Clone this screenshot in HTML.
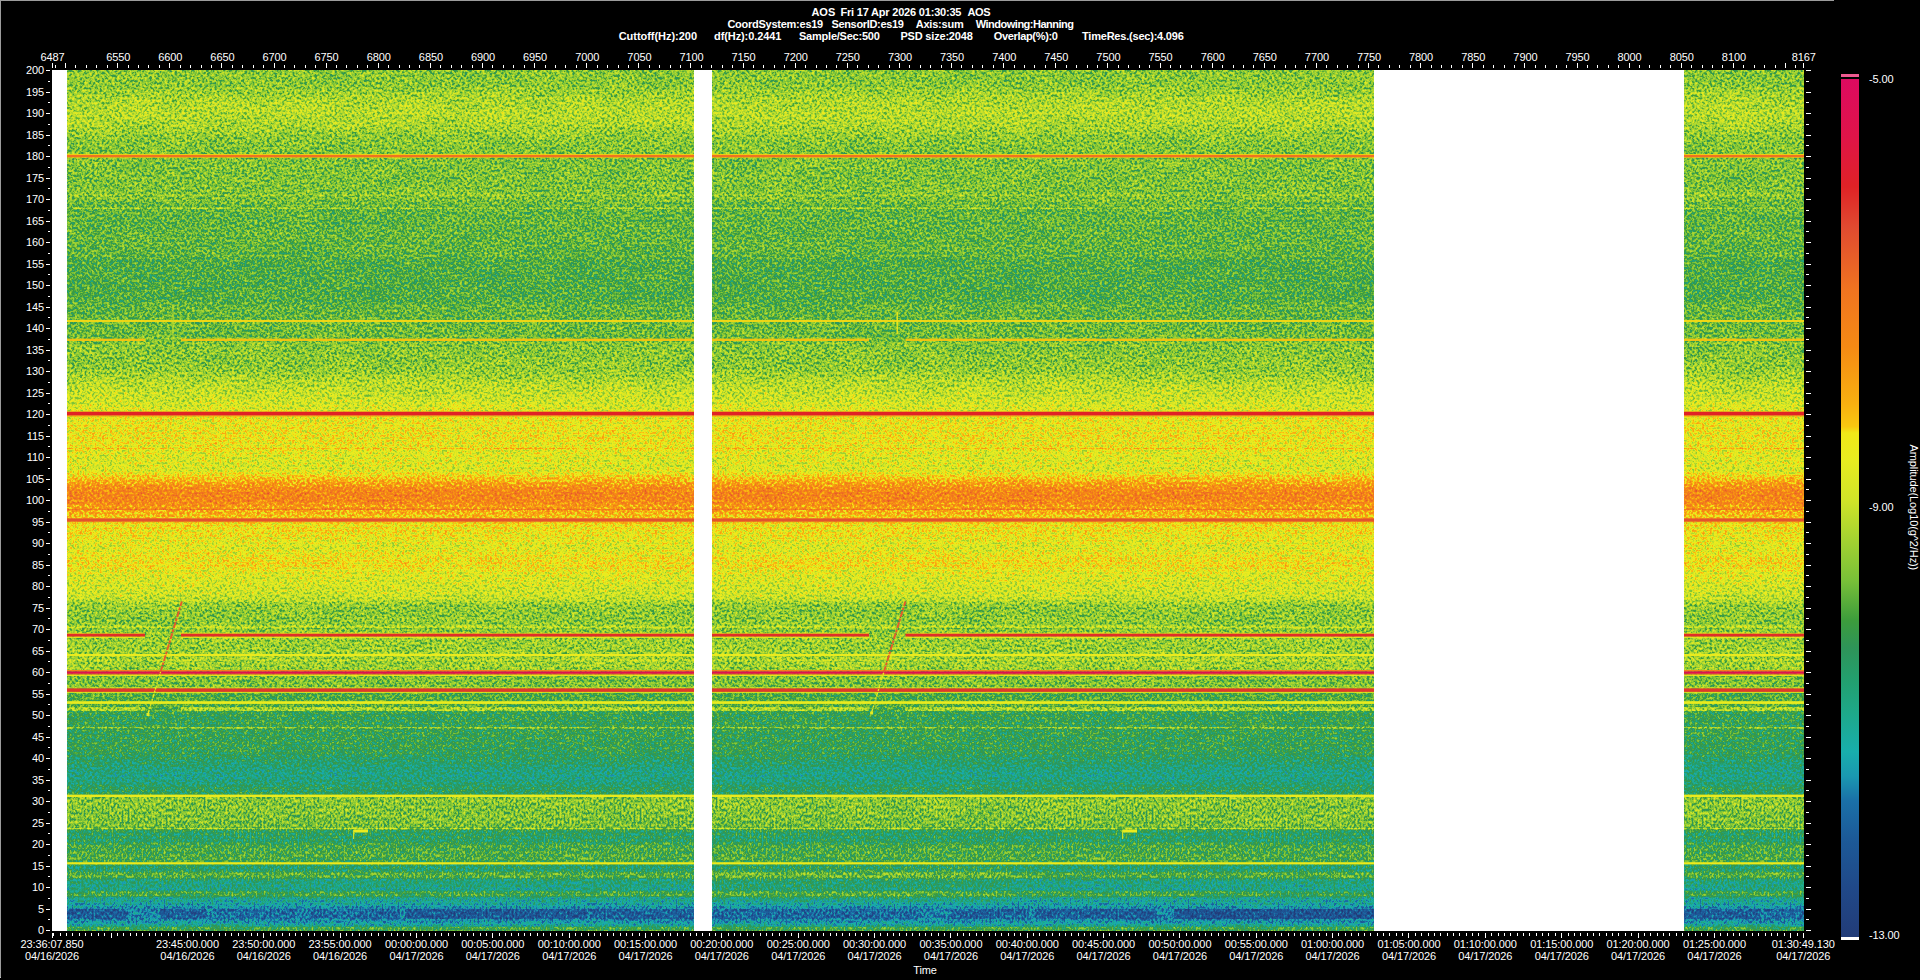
<!DOCTYPE html>
<html lang="en"><head><meta charset="utf-8"><title>AOS Spectrogram es19</title>
<style>
html,body{margin:0;padding:0;background:#000;}
body{width:1920px;height:980px;position:relative;overflow:hidden;font-family:"Liberation Sans",sans-serif;color:#fff;}
.t{position:absolute;font-weight:bold;font-size:11px;line-height:12px;white-space:pre;}
.edge{position:absolute;background:#9c9c9c;}
</style></head><body>
<div class="edge" style="left:0;top:0;width:1834px;height:1px"></div>
<div class="edge" style="left:0;top:0;width:1px;height:977px"></div>
<div class="edge" style="left:0;top:977px;width:1px;height:1px;background:#c4c4c4"></div>
<span class="t" style="left:811.4px;top:6px;letter-spacing:0.019px">AOS</span>
<span class="t" style="left:840.4px;top:6px;letter-spacing:-0.194px">Fri 17 Apr 2026 01:30:35</span>
<span class="t" style="left:967.4px;top:6px;letter-spacing:-0.315px">AOS</span>
<span class="t" style="left:727.4px;top:18px;letter-spacing:-0.254px">CoordSystem:es19</span>
<span class="t" style="left:831.4px;top:18px;letter-spacing:-0.326px">SensorID:es19</span>
<span class="t" style="left:915.7px;top:18px;letter-spacing:-0.204px">Axis:sum</span>
<span class="t" style="left:975.7px;top:18px;letter-spacing:-0.489px">Windowing:Hanning</span>
<span class="t" style="left:618.7px;top:30px;letter-spacing:-0.035px">Cuttoff(Hz):200</span>
<span class="t" style="left:714.0px;top:30px;letter-spacing:-0.090px">df(Hz):0.2441</span>
<span class="t" style="left:799.0px;top:30px;letter-spacing:-0.227px">Sample/Sec:500</span>
<span class="t" style="left:900.4px;top:30px;letter-spacing:-0.185px">PSD size:2048</span>
<span class="t" style="left:993.7px;top:30px;letter-spacing:-0.330px">Overlap(%):0</span>
<span class="t" style="left:1082.0px;top:30px;letter-spacing:-0.210px">TimeRes.(sec):4.096</span>
<svg id="spec" width="1752" height="861" viewBox="52 70 1752 861" style="position:absolute;left:52px;top:70px">
<defs>
<linearGradient id="pg" gradientUnits="userSpaceOnUse" x1="0" y1="70" x2="0" y2="931">
<stop offset="0.0000" stop-color="#737373"/>
<stop offset="0.0174" stop-color="#737373"/>
<stop offset="0.0348" stop-color="#7c7c7c"/>
<stop offset="0.0499" stop-color="#7f7f7f"/>
<stop offset="0.0639" stop-color="#7c7c7c"/>
<stop offset="0.0778" stop-color="#747474"/>
<stop offset="0.0929" stop-color="#717171"/>
<stop offset="0.1022" stop-color="#707070"/>
<stop offset="0.1103" stop-color="#707070"/>
<stop offset="0.1510" stop-color="#707070"/>
<stop offset="0.1556" stop-color="#6b6b6b"/>
<stop offset="0.1649" stop-color="#696969"/>
<stop offset="0.2091" stop-color="#696969"/>
<stop offset="0.2230" stop-color="#646464"/>
<stop offset="0.2671" stop-color="#646464"/>
<stop offset="0.2741" stop-color="#696969"/>
<stop offset="0.2880" stop-color="#696969"/>
<stop offset="0.2950" stop-color="#6c6c6c"/>
<stop offset="0.3101" stop-color="#6c6c6c"/>
<stop offset="0.3171" stop-color="#717171"/>
<stop offset="0.3484" stop-color="#757575"/>
<stop offset="0.3659" stop-color="#808080"/>
<stop offset="0.3786" stop-color="#848484"/>
<stop offset="0.3937" stop-color="#8b8b8b"/>
<stop offset="0.4042" stop-color="#919191"/>
<stop offset="0.4297" stop-color="#939393"/>
<stop offset="0.4437" stop-color="#8e8e8e"/>
<stop offset="0.4646" stop-color="#8b8b8b"/>
<stop offset="0.4715" stop-color="#999999"/>
<stop offset="0.4785" stop-color="#a7a7a7"/>
<stop offset="0.4855" stop-color="#b4b4b4"/>
<stop offset="0.4936" stop-color="#b9b9b9"/>
<stop offset="0.5017" stop-color="#b7b7b7"/>
<stop offset="0.5099" stop-color="#a9a9a9"/>
<stop offset="0.5203" stop-color="#9f9f9f"/>
<stop offset="0.5273" stop-color="#969696"/>
<stop offset="0.5401" stop-color="#939393"/>
<stop offset="0.5552" stop-color="#8c8c8c"/>
<stop offset="0.5645" stop-color="#939393"/>
<stop offset="0.5761" stop-color="#969696"/>
<stop offset="0.5830" stop-color="#8e8e8e"/>
<stop offset="0.5981" stop-color="#898989"/>
<stop offset="0.6109" stop-color="#858585"/>
<stop offset="0.6156" stop-color="#818181"/>
<stop offset="0.6202" stop-color="#777777"/>
<stop offset="0.6295" stop-color="#747474"/>
<stop offset="0.6492" stop-color="#737373"/>
<stop offset="0.6609" stop-color="#777777"/>
<stop offset="0.6771" stop-color="#777777"/>
<stop offset="0.6887" stop-color="#787878"/>
<stop offset="0.6969" stop-color="#787878"/>
<stop offset="0.7038" stop-color="#707070"/>
<stop offset="0.7154" stop-color="#707070"/>
<stop offset="0.7224" stop-color="#646464"/>
<stop offset="0.7305" stop-color="#646464"/>
<stop offset="0.7364" stop-color="#666666"/>
<stop offset="0.7398" stop-color="#666666"/>
<stop offset="0.7468" stop-color="#5c5c5c"/>
<stop offset="0.7898" stop-color="#5b5b5b"/>
<stop offset="0.8014" stop-color="#545454"/>
<stop offset="0.8107" stop-color="#4d4d4d"/>
<stop offset="0.8188" stop-color="#494949"/>
<stop offset="0.8281" stop-color="#4e4e4e"/>
<stop offset="0.8339" stop-color="#565656"/>
<stop offset="0.8409" stop-color="#565656"/>
<stop offset="0.8455" stop-color="#737373"/>
<stop offset="0.8618" stop-color="#717171"/>
<stop offset="0.8792" stop-color="#6e6e6e"/>
<stop offset="0.8839" stop-color="#565656"/>
<stop offset="0.8955" stop-color="#545454"/>
<stop offset="0.9001" stop-color="#616161"/>
<stop offset="0.9152" stop-color="#646464"/>
<stop offset="0.9187" stop-color="#606060"/>
<stop offset="0.9245" stop-color="#535353"/>
<stop offset="0.9303" stop-color="#535353"/>
<stop offset="0.9326" stop-color="#666666"/>
<stop offset="0.9373" stop-color="#666666"/>
<stop offset="0.9408" stop-color="#4d4d4d"/>
<stop offset="0.9524" stop-color="#484848"/>
<stop offset="0.9547" stop-color="#606060"/>
<stop offset="0.9593" stop-color="#606060"/>
<stop offset="0.9617" stop-color="#464646"/>
<stop offset="0.9675" stop-color="#404040"/>
<stop offset="0.9710" stop-color="#383838"/>
<stop offset="0.9744" stop-color="#303030"/>
<stop offset="0.9814" stop-color="#2e2e2e"/>
<stop offset="0.9872" stop-color="#313131"/>
<stop offset="0.9907" stop-color="#393939"/>
<stop offset="0.9942" stop-color="#464646"/>
<stop offset="0.9959" stop-color="#606060"/>
<stop offset="1.0000" stop-color="#606060"/>
</linearGradient>
<filter id="sp" x="48" y="66" width="1760" height="735" filterUnits="userSpaceOnUse" color-interpolation-filters="sRGB">
<feTurbulence type="fractalNoise" baseFrequency="0.4 0.4" numOctaves="2" seed="7" result="n0"/>
<feColorMatrix in="n0" type="matrix" values="1 0 0 0 0 1 0 0 0 0 1 0 0 0 0 0 0 0 0 1" result="n1"/>
<feComponentTransfer in="n1" result="n2">
<feFuncR type="table" tableValues="0.3937 0.3937 0.3937 0.3937 0.3937 0.3937 0.3937 0.3937 0.3937 0.3937 0.3937 0.3937 0.3937 0.3937 0.3937 0.3937 0.3937 0.3937 0.3937 0.3937 0.3937 0.3937 0.3937 0.3937 0.3937 0.3937 0.3937 0.3937 0.3937 0.3937 0.3937 0.3937 0.3960 0.4027 0.4089 0.4150 0.4207 0.4262 0.4315 0.4365 0.4414 0.4461 0.4507 0.4553 0.4597 0.4641 0.4683 0.4726 0.4768 0.4808 0.4868 0.4934 0.4971 0.5008 0.5044 0.5079 0.5114 0.5148 0.5180 0.5212 0.5245 0.5276 0.5307 0.5339 0.5370 0.5402 0.5433 0.5463 0.5495 0.5525 0.5557 0.5587 0.5619 0.5650 0.5681 0.5712 0.5742 0.5770 0.5800 0.5828 0.5857 0.5886 0.5917 0.5947 0.5979 0.6012 0.6020 0.6020 0.6020 0.6020 0.6020 0.6020 0.6020 0.6020 0.6020 0.6020 0.6020 0.6020 0.6020 0.6020 0.6020"/><feFuncG type="table" tableValues="0.3937 0.3937 0.3937 0.3937 0.3937 0.3937 0.3937 0.3937 0.3937 0.3937 0.3937 0.3937 0.3937 0.3937 0.3937 0.3937 0.3937 0.3937 0.3937 0.3937 0.3937 0.3937 0.3937 0.3937 0.3937 0.3937 0.3937 0.3937 0.3937 0.3937 0.3937 0.3937 0.3960 0.4027 0.4089 0.4150 0.4207 0.4262 0.4315 0.4365 0.4414 0.4461 0.4507 0.4553 0.4597 0.4641 0.4683 0.4726 0.4768 0.4808 0.4868 0.4934 0.4971 0.5008 0.5044 0.5079 0.5114 0.5148 0.5180 0.5212 0.5245 0.5276 0.5307 0.5339 0.5370 0.5402 0.5433 0.5463 0.5495 0.5525 0.5557 0.5587 0.5619 0.5650 0.5681 0.5712 0.5742 0.5770 0.5800 0.5828 0.5857 0.5886 0.5917 0.5947 0.5979 0.6012 0.6020 0.6020 0.6020 0.6020 0.6020 0.6020 0.6020 0.6020 0.6020 0.6020 0.6020 0.6020 0.6020 0.6020 0.6020"/><feFuncB type="table" tableValues="0.3937 0.3937 0.3937 0.3937 0.3937 0.3937 0.3937 0.3937 0.3937 0.3937 0.3937 0.3937 0.3937 0.3937 0.3937 0.3937 0.3937 0.3937 0.3937 0.3937 0.3937 0.3937 0.3937 0.3937 0.3937 0.3937 0.3937 0.3937 0.3937 0.3937 0.3937 0.3937 0.3960 0.4027 0.4089 0.4150 0.4207 0.4262 0.4315 0.4365 0.4414 0.4461 0.4507 0.4553 0.4597 0.4641 0.4683 0.4726 0.4768 0.4808 0.4868 0.4934 0.4971 0.5008 0.5044 0.5079 0.5114 0.5148 0.5180 0.5212 0.5245 0.5276 0.5307 0.5339 0.5370 0.5402 0.5433 0.5463 0.5495 0.5525 0.5557 0.5587 0.5619 0.5650 0.5681 0.5712 0.5742 0.5770 0.5800 0.5828 0.5857 0.5886 0.5917 0.5947 0.5979 0.6012 0.6020 0.6020 0.6020 0.6020 0.6020 0.6020 0.6020 0.6020 0.6020 0.6020 0.6020 0.6020 0.6020 0.6020 0.6020"/>
</feComponentTransfer>
<feTurbulence type="fractalNoise" baseFrequency="0.025 0.07" numOctaves="2" seed="9" result="lf0"/>
<feColorMatrix in="lf0" type="matrix" values="0.045 0 0 0 0.4775 0.045 0 0 0 0.4775 0.045 0 0 0 0.4775 0 0 0 0 1" result="lf"/>
<feComposite in="n2" in2="lf" operator="arithmetic" k1="0" k2="1" k3="1" k4="-0.5" result="n3"/>
<feComposite in="SourceGraphic" in2="n3" operator="arithmetic" k1="0" k2="1" k3="1" k4="-0.5" result="s"/>
<feComponentTransfer in="s" result="c">
<feFuncR type="table" tableValues="0.133 0.132 0.131 0.130 0.129 0.128 0.127 0.126 0.124 0.122 0.120 0.118 0.115 0.113 0.111 0.109 0.108 0.107 0.105 0.104 0.102 0.102 0.102 0.102 0.102 0.100 0.098 0.096 0.095 0.099 0.103 0.107 0.111 0.115 0.119 0.123 0.126 0.130 0.133 0.142 0.151 0.160 0.169 0.179 0.191 0.205 0.219 0.233 0.267 0.307 0.347 0.386 0.426 0.466 0.495 0.523 0.551 0.579 0.607 0.635 0.664 0.693 0.723 0.753 0.782 0.812 0.830 0.846 0.861 0.877 0.893 0.909 0.917 0.925 0.932 0.940 0.967 0.973 0.973 0.973 0.972 0.970 0.969 0.968 0.966 0.965 0.964 0.962 0.961 0.958 0.956 0.954 0.952 0.949 0.947 0.945 0.942 0.938 0.931 0.924 0.918 0.911 0.904 0.898 0.891 0.885 0.878 0.878 0.878 0.878 0.878 0.878 0.878 0.878 0.878 0.878 0.878 0.878 0.878 0.878 0.878 0.876 0.875 0.873 0.872 0.871 0.869 0.868 0.867"/>
<feFuncG type="table" tableValues="0.235 0.242 0.248 0.255 0.261 0.268 0.275 0.281 0.290 0.299 0.309 0.318 0.327 0.337 0.346 0.357 0.373 0.388 0.403 0.419 0.434 0.468 0.511 0.553 0.596 0.620 0.643 0.666 0.681 0.677 0.673 0.669 0.665 0.661 0.656 0.649 0.642 0.635 0.628 0.619 0.610 0.601 0.591 0.582 0.587 0.595 0.602 0.610 0.631 0.655 0.679 0.702 0.726 0.750 0.763 0.775 0.787 0.798 0.810 0.822 0.833 0.845 0.857 0.869 0.881 0.893 0.899 0.904 0.909 0.915 0.920 0.925 0.922 0.918 0.914 0.911 0.805 0.761 0.733 0.705 0.682 0.664 0.647 0.629 0.611 0.594 0.576 0.559 0.541 0.531 0.521 0.511 0.500 0.490 0.480 0.470 0.460 0.446 0.428 0.411 0.393 0.376 0.359 0.341 0.324 0.306 0.288 0.262 0.237 0.211 0.185 0.159 0.133 0.126 0.118 0.111 0.103 0.096 0.089 0.081 0.076 0.071 0.066 0.062 0.057 0.053 0.048 0.044 0.039"/>
<feFuncB type="table" tableValues="0.471 0.479 0.488 0.497 0.505 0.514 0.523 0.532 0.540 0.548 0.557 0.565 0.573 0.582 0.590 0.599 0.610 0.622 0.633 0.644 0.655 0.665 0.673 0.682 0.690 0.686 0.682 0.677 0.667 0.643 0.619 0.595 0.571 0.548 0.525 0.504 0.483 0.462 0.441 0.422 0.404 0.386 0.367 0.349 0.323 0.296 0.268 0.241 0.233 0.231 0.228 0.225 0.223 0.220 0.215 0.211 0.206 0.201 0.197 0.192 0.187 0.181 0.175 0.169 0.164 0.158 0.152 0.147 0.142 0.136 0.131 0.126 0.118 0.111 0.103 0.096 0.068 0.063 0.063 0.063 0.064 0.065 0.067 0.069 0.071 0.073 0.075 0.077 0.078 0.084 0.090 0.095 0.101 0.106 0.112 0.117 0.123 0.129 0.136 0.142 0.149 0.156 0.162 0.169 0.175 0.182 0.188 0.181 0.175 0.168 0.162 0.155 0.149 0.167 0.185 0.203 0.221 0.240 0.258 0.276 0.289 0.300 0.311 0.322 0.333 0.344 0.355 0.366 0.376"/>
<feFuncA type="linear" slope="0" intercept="1"/>
</feComponentTransfer>
<feGaussianBlur in="c" stdDeviation="0.75" result="B"/>
<feColorMatrix in="c" type="matrix" values="0.299 0.587 0.114 0 0 0.299 0.587 0.114 0 0 0.299 0.587 0.114 0 0 0 0 0 0 1" result="L1"/>
<feColorMatrix in="B" type="matrix" values="-0.299 -0.587 -0.114 0 1 -0.299 -0.587 -0.114 0 1 -0.299 -0.587 -0.114 0 1 0 0 0 0 1" result="L2i"/>
<feComposite in="L1" in2="L2i" operator="arithmetic" k1="0" k2="0.5" k3="0.5" k4="0" result="D"/>
<feComposite in="B" in2="D" operator="arithmetic" k1="0" k2="1" k3="2" k4="-1"/>
</filter>
<filter id="sp2" x="48" y="793" width="1760" height="142" filterUnits="userSpaceOnUse" color-interpolation-filters="sRGB">
<feTurbulence type="fractalNoise" baseFrequency="0.5 0.33" numOctaves="2" seed="11" result="n0"/>
<feColorMatrix in="n0" type="matrix" values="1 0 0 0 0 1 0 0 0 0 1 0 0 0 0 0 0 0 0 1" result="n1"/>
<feComponentTransfer in="n1" result="n2">
<feFuncR type="table" tableValues="0.3937 0.3937 0.3937 0.3937 0.3937 0.3937 0.3937 0.3937 0.3937 0.3937 0.3937 0.3937 0.3937 0.3937 0.3937 0.3937 0.3937 0.3937 0.3937 0.3937 0.3937 0.3937 0.3937 0.3937 0.3937 0.3937 0.3937 0.3937 0.3937 0.3937 0.3937 0.3937 0.3960 0.4027 0.4089 0.4150 0.4207 0.4262 0.4315 0.4365 0.4414 0.4461 0.4507 0.4553 0.4597 0.4641 0.4683 0.4726 0.4768 0.4808 0.4868 0.4934 0.4971 0.5008 0.5044 0.5079 0.5114 0.5148 0.5180 0.5212 0.5245 0.5276 0.5307 0.5339 0.5370 0.5402 0.5433 0.5463 0.5495 0.5525 0.5557 0.5587 0.5619 0.5650 0.5681 0.5712 0.5742 0.5770 0.5800 0.5828 0.5857 0.5886 0.5917 0.5947 0.5979 0.6012 0.6020 0.6020 0.6020 0.6020 0.6020 0.6020 0.6020 0.6020 0.6020 0.6020 0.6020 0.6020 0.6020 0.6020 0.6020"/><feFuncG type="table" tableValues="0.3937 0.3937 0.3937 0.3937 0.3937 0.3937 0.3937 0.3937 0.3937 0.3937 0.3937 0.3937 0.3937 0.3937 0.3937 0.3937 0.3937 0.3937 0.3937 0.3937 0.3937 0.3937 0.3937 0.3937 0.3937 0.3937 0.3937 0.3937 0.3937 0.3937 0.3937 0.3937 0.3960 0.4027 0.4089 0.4150 0.4207 0.4262 0.4315 0.4365 0.4414 0.4461 0.4507 0.4553 0.4597 0.4641 0.4683 0.4726 0.4768 0.4808 0.4868 0.4934 0.4971 0.5008 0.5044 0.5079 0.5114 0.5148 0.5180 0.5212 0.5245 0.5276 0.5307 0.5339 0.5370 0.5402 0.5433 0.5463 0.5495 0.5525 0.5557 0.5587 0.5619 0.5650 0.5681 0.5712 0.5742 0.5770 0.5800 0.5828 0.5857 0.5886 0.5917 0.5947 0.5979 0.6012 0.6020 0.6020 0.6020 0.6020 0.6020 0.6020 0.6020 0.6020 0.6020 0.6020 0.6020 0.6020 0.6020 0.6020 0.6020"/><feFuncB type="table" tableValues="0.3937 0.3937 0.3937 0.3937 0.3937 0.3937 0.3937 0.3937 0.3937 0.3937 0.3937 0.3937 0.3937 0.3937 0.3937 0.3937 0.3937 0.3937 0.3937 0.3937 0.3937 0.3937 0.3937 0.3937 0.3937 0.3937 0.3937 0.3937 0.3937 0.3937 0.3937 0.3937 0.3960 0.4027 0.4089 0.4150 0.4207 0.4262 0.4315 0.4365 0.4414 0.4461 0.4507 0.4553 0.4597 0.4641 0.4683 0.4726 0.4768 0.4808 0.4868 0.4934 0.4971 0.5008 0.5044 0.5079 0.5114 0.5148 0.5180 0.5212 0.5245 0.5276 0.5307 0.5339 0.5370 0.5402 0.5433 0.5463 0.5495 0.5525 0.5557 0.5587 0.5619 0.5650 0.5681 0.5712 0.5742 0.5770 0.5800 0.5828 0.5857 0.5886 0.5917 0.5947 0.5979 0.6012 0.6020 0.6020 0.6020 0.6020 0.6020 0.6020 0.6020 0.6020 0.6020 0.6020 0.6020 0.6020 0.6020 0.6020 0.6020"/>
</feComponentTransfer>
<feTurbulence type="fractalNoise" baseFrequency="0.025 0.07" numOctaves="2" seed="13" result="lf0"/>
<feColorMatrix in="lf0" type="matrix" values="0.045 0 0 0 0.4775 0.045 0 0 0 0.4775 0.045 0 0 0 0.4775 0 0 0 0 1" result="lf"/>
<feComposite in="n2" in2="lf" operator="arithmetic" k1="0" k2="1" k3="1" k4="-0.5" result="n3"/>
<feComposite in="SourceGraphic" in2="n3" operator="arithmetic" k1="0" k2="1" k3="1" k4="-0.5" result="s"/>
<feComponentTransfer in="s" result="c">
<feFuncR type="table" tableValues="0.133 0.132 0.131 0.130 0.129 0.128 0.127 0.126 0.124 0.122 0.120 0.118 0.115 0.113 0.111 0.109 0.108 0.107 0.105 0.104 0.102 0.102 0.102 0.102 0.102 0.100 0.098 0.096 0.095 0.099 0.103 0.107 0.111 0.115 0.119 0.123 0.126 0.130 0.133 0.142 0.151 0.160 0.169 0.179 0.191 0.205 0.219 0.233 0.267 0.307 0.347 0.386 0.426 0.466 0.495 0.523 0.551 0.579 0.607 0.635 0.664 0.693 0.723 0.753 0.782 0.812 0.830 0.846 0.861 0.877 0.893 0.909 0.917 0.925 0.932 0.940 0.967 0.973 0.973 0.973 0.972 0.970 0.969 0.968 0.966 0.965 0.964 0.962 0.961 0.958 0.956 0.954 0.952 0.949 0.947 0.945 0.942 0.938 0.931 0.924 0.918 0.911 0.904 0.898 0.891 0.885 0.878 0.878 0.878 0.878 0.878 0.878 0.878 0.878 0.878 0.878 0.878 0.878 0.878 0.878 0.878 0.876 0.875 0.873 0.872 0.871 0.869 0.868 0.867"/>
<feFuncG type="table" tableValues="0.235 0.242 0.248 0.255 0.261 0.268 0.275 0.281 0.290 0.299 0.309 0.318 0.327 0.337 0.346 0.357 0.373 0.388 0.403 0.419 0.434 0.468 0.511 0.553 0.596 0.620 0.643 0.666 0.681 0.677 0.673 0.669 0.665 0.661 0.656 0.649 0.642 0.635 0.628 0.619 0.610 0.601 0.591 0.582 0.587 0.595 0.602 0.610 0.631 0.655 0.679 0.702 0.726 0.750 0.763 0.775 0.787 0.798 0.810 0.822 0.833 0.845 0.857 0.869 0.881 0.893 0.899 0.904 0.909 0.915 0.920 0.925 0.922 0.918 0.914 0.911 0.805 0.761 0.733 0.705 0.682 0.664 0.647 0.629 0.611 0.594 0.576 0.559 0.541 0.531 0.521 0.511 0.500 0.490 0.480 0.470 0.460 0.446 0.428 0.411 0.393 0.376 0.359 0.341 0.324 0.306 0.288 0.262 0.237 0.211 0.185 0.159 0.133 0.126 0.118 0.111 0.103 0.096 0.089 0.081 0.076 0.071 0.066 0.062 0.057 0.053 0.048 0.044 0.039"/>
<feFuncB type="table" tableValues="0.471 0.479 0.488 0.497 0.505 0.514 0.523 0.532 0.540 0.548 0.557 0.565 0.573 0.582 0.590 0.599 0.610 0.622 0.633 0.644 0.655 0.665 0.673 0.682 0.690 0.686 0.682 0.677 0.667 0.643 0.619 0.595 0.571 0.548 0.525 0.504 0.483 0.462 0.441 0.422 0.404 0.386 0.367 0.349 0.323 0.296 0.268 0.241 0.233 0.231 0.228 0.225 0.223 0.220 0.215 0.211 0.206 0.201 0.197 0.192 0.187 0.181 0.175 0.169 0.164 0.158 0.152 0.147 0.142 0.136 0.131 0.126 0.118 0.111 0.103 0.096 0.068 0.063 0.063 0.063 0.064 0.065 0.067 0.069 0.071 0.073 0.075 0.077 0.078 0.084 0.090 0.095 0.101 0.106 0.112 0.117 0.123 0.129 0.136 0.142 0.149 0.156 0.162 0.169 0.175 0.182 0.188 0.181 0.175 0.168 0.162 0.155 0.149 0.167 0.185 0.203 0.221 0.240 0.258 0.276 0.289 0.300 0.311 0.322 0.333 0.344 0.355 0.366 0.376"/>
<feFuncA type="linear" slope="0" intercept="1"/>
</feComponentTransfer>
<feGaussianBlur in="c" stdDeviation="0.75" result="B"/>
<feColorMatrix in="c" type="matrix" values="0.299 0.587 0.114 0 0 0.299 0.587 0.114 0 0 0.299 0.587 0.114 0 0 0 0 0 0 1" result="L1"/>
<feColorMatrix in="B" type="matrix" values="-0.299 -0.587 -0.114 0 1 -0.299 -0.587 -0.114 0 1 -0.299 -0.587 -0.114 0 1 0 0 0 0 1" result="L2i"/>
<feComposite in="L1" in2="L2i" operator="arithmetic" k1="0" k2="0.5" k3="0.5" k4="0" result="D"/>
<feComposite in="B" in2="D" operator="arithmetic" k1="0" k2="1" k3="2" k4="-1"/>
</filter>
<clipPath id="cpA"><rect x="52" y="70" width="1752" height="727"/></clipPath>
<clipPath id="cpB"><rect x="52" y="797" width="1752" height="134"/></clipPath>
<clipPath id="cp">
<rect x="67" y="70" width="627" height="861"/>
<rect x="712" y="70" width="662" height="861"/>
<rect x="1684" y="70" width="120" height="861"/>
</clipPath>
<g id="src">
<rect x="46" y="64" width="1764" height="873" fill="url(#pg)"/>
<rect x="67" y="909" width="61" height="10" fill="#1d1d1d" opacity="0.85"/><rect x="160" y="909" width="46" height="10" fill="#1d1d1d" opacity="0.85"/><rect x="215" y="909" width="80" height="10" fill="#262626" opacity="0.85"/><rect x="310" y="909" width="90" height="10" fill="#232323" opacity="0.85"/><rect x="405" y="909" width="182" height="10" fill="#1b1b1b" opacity="0.85"/><rect x="590" y="909" width="104" height="10" fill="#202020" opacity="0.85"/><rect x="713" y="909" width="206" height="10" fill="#232323" opacity="0.85"/><rect x="951" y="909" width="77" height="10" fill="#202020" opacity="0.85"/><rect x="1035" y="909" width="121" height="10" fill="#1e1e1e" opacity="0.85"/><rect x="1174" y="909" width="200" height="10" fill="#161616" opacity="0.85"/><rect x="1684" y="909" width="76" height="10" fill="#1d1d1d" opacity="0.85"/><rect x="1765" y="909" width="39" height="10" fill="#232323" opacity="0.85"/><rect x="712" y="866" width="300" height="36" fill="#fff" opacity="0.035"/><rect x="1012" y="866" width="362" height="36" fill="#000" opacity="0.02"/>
<rect x="52" y="194.25" width="1752" height="1.5" fill="#787878"/>
<rect x="52" y="207.55" width="1752" height="1.5" fill="#797979"/>
<rect x="52" y="625.60" width="1752" height="2.4" fill="#818181"/>
<rect x="52" y="659.30" width="1752" height="1.6" fill="#808080"/>
<rect x="52" y="726.90" width="1752" height="1.6" fill="#747474"/>
<rect x="52" y="827.95" width="1752" height="1.3" fill="#7c7c7c"/>
<rect x="52" y="447.95" width="1752" height="1.5" fill="#9f9f9f"/>
<rect x="52" y="508.65" width="1752" height="1.3" fill="#c2c2c2"/>
<rect x="52" y="255.50" width="1752" height="1" fill="#6e6e6e"/>
<rect x="52" y="707.20" width="93" height="3.8" fill="#7c7c7c"/>
<rect x="181" y="707.20" width="688" height="3.8" fill="#7c7c7c"/>
<rect x="905.5" y="707.20" width="898.5" height="3.8" fill="#7c7c7c"/>

</g>
</defs>
<rect x="52" y="70" width="1752" height="861" fill="#fff"/>
<g clip-path="url(#cp)"><g clip-path="url(#cpA)"><g filter="url(#sp)"><use href="#src"/></g></g><g clip-path="url(#cpB)"><g filter="url(#sp2)"><use href="#src"/></g></g>
<rect x="52" y="154" width="1752" height="1" fill="#f7cd11" opacity="0.9"/>
<rect x="52" y="155" width="1752" height="2" fill="#ef7321"/>
<rect x="52" y="157" width="1752" height="1" fill="#f8ae10" opacity="0.7"/>
<rect x="52" y="320" width="1752" height="2" fill="#f4d814" opacity="0.95"/>
<rect x="52" y="411" width="1752" height="1" fill="#f0e818" opacity="0.6"/>
<rect x="52" y="411.7" width="1752" height="3.5" fill="#e02226"/>
<rect x="52" y="415.2" width="1752" height="1" fill="#ee6f22"/>
<rect x="52" y="416.2" width="1752" height="0.8" fill="#f8b810" opacity="0.5"/>
<rect x="52" y="518" width="1752" height="0.6" fill="#f27e1b" opacity="0.8"/>
<rect x="52" y="518.5" width="1752" height="3.2" fill="#e3532d"/>
<rect x="52" y="521.7" width="1752" height="0.5" fill="#f38219" opacity="0.7"/>
<rect x="52" y="654" width="1752" height="2.2" fill="#eaeb1e"/>
<rect x="52" y="670" width="1752" height="1.4" fill="#f38219"/>
<rect x="52" y="671.4" width="1752" height="2.4" fill="#df1050"/>
<rect x="52" y="673.8" width="1752" height="0.9" fill="#e65a2a"/>
<rect x="52" y="674.7" width="1752" height="1.3" fill="#edea1b" opacity="0.9"/>
<rect x="52" y="687.4" width="1752" height="1" fill="#edea1b" opacity="0.9"/>
<rect x="52" y="688.4" width="1752" height="3.5" fill="#e0372b"/>
<rect x="52" y="691.9" width="1752" height="1.1" fill="#edea1b" opacity="0.8"/>
<rect x="52" y="701.2" width="1752" height="2.7" fill="#eaeb1e"/>
<rect x="52" y="794.6" width="1752" height="2.4" fill="#eaeb1e"/>
<rect x="52" y="862.2" width="1752" height="2.2" fill="#edea1b"/>
<rect x="52" y="338.6" width="93" height="2.4" fill="#f8c310" opacity="0.95"/>
<rect x="181" y="338.6" width="688" height="2.4" fill="#f8c310" opacity="0.95"/>
<rect x="905.5" y="338.6" width="898.5" height="2.4" fill="#f8c310" opacity="0.95"/>
<rect x="52" y="632.8" width="93" height="1" fill="#edea1b" opacity="0.9"/>
<rect x="52" y="633.7" width="93" height="3.0" fill="#e02d29"/>
<rect x="52" y="636.7" width="93" height="1.3" fill="#edea1b" opacity="0.8"/>
<rect x="181" y="632.8" width="688" height="1" fill="#edea1b" opacity="0.9"/>
<rect x="181" y="633.7" width="688" height="3.0" fill="#e02d29"/>
<rect x="181" y="636.7" width="688" height="1.3" fill="#edea1b" opacity="0.8"/>
<rect x="905.5" y="632.8" width="898.5" height="1" fill="#edea1b" opacity="0.9"/>
<rect x="905.5" y="633.7" width="898.5" height="3.0" fill="#e02d29"/>
<rect x="905.5" y="636.7" width="898.5" height="1.3" fill="#edea1b" opacity="0.8"/>
<path d="M148.0 714.0L160.6 672.0" stroke="#eaeb1e" stroke-width="1.3" stroke-dasharray="4 1.5 2 1" fill="none"/>
<path d="M160.6 672.0L181.8 601.5" stroke="#e65a2a" stroke-width="1.9" stroke-dasharray="6 1 3 1.5" fill="none"/>
<rect x="146.5" y="713.0" width="3" height="3" fill="#e5eb21"/>
<path d="M871.6 712.5L883.9 672.0" stroke="#eaeb1e" stroke-width="1.3" stroke-dasharray="4 1.5 2 1" fill="none"/>
<path d="M883.9 672.0L905.4 601.5" stroke="#e65a2a" stroke-width="1.9" stroke-dasharray="6 1 3 1.5" fill="none"/>
<rect x="870.1" y="711.5" width="3" height="3" fill="#e5eb21"/>
<path d="M173 712L181 742" stroke="#a3d231" stroke-width="1" stroke-dasharray="2 2" fill="none"/>
<path d="M895 710L904 738" stroke="#a3d231" stroke-width="1" stroke-dasharray="2 2" fill="none"/>
<rect x="172.5" y="304" width="1" height="50" fill="#c8e12a"/>
<rect x="896.5" y="312" width="1.4" height="22" fill="#f0e818"/>
<rect x="354" y="829.5" width="14" height="3" fill="#eaeb1e"/>
<rect x="353" y="830" width="1.2" height="9" fill="#c8e12a"/>
<rect x="1123" y="829.5" width="14" height="3" fill="#eaeb1e"/>
<rect x="1122" y="830" width="1.2" height="9" fill="#c8e12a"/>
</g></svg>
<div style="position:absolute;left:1841px;top:74px;width:18px;height:3px;background:#ee5a90"></div><div style="position:absolute;left:1841px;top:79px;width:18px;height:858px;background:linear-gradient(to bottom,#dd0a60 0.00%,#e01448 6.75%,#e02226 12.50%,#e04a30 17.25%,#f07420 24.62%,#f58a14 31.25%,#f8b010 37.87%,#f8c810 40.50%,#f0e818 41.25%,#e8ec20 44.50%,#d0e428 49.12%,#a8d430 53.25%,#78c038 58.50%,#3c9c3c 63.13%,#2e9458 66.25%,#22a070 70.25%,#1ea888 73.75%,#18aeac 78.38%,#1a98b0 81.25%,#1a70a8 84.12%,#1c5a98 88.50%,#204888 94.38%,#223c78 100.00%)"></div><div style="position:absolute;left:1841px;top:937px;width:18px;height:3px;background:#fff"></div>
<svg width="1920" height="980" style="position:absolute;left:0;top:0" shape-rendering="crispEdges" font-family="Liberation Sans, sans-serif" font-size="11" fill="#fff" letter-spacing="-0.1">
<path d="M55 65h1v3h-1zM65 63h1v5h-1zM75 65h1v3h-1zM86 65h1v3h-1zM96 65h1v3h-1zM107 65h1v3h-1zM117 63h1v5h-1zM128 65h1v3h-1zM138 65h1v3h-1zM148 65h1v3h-1zM159 65h1v3h-1zM169 63h1v5h-1zM180 65h1v3h-1zM190 65h1v3h-1zM201 65h1v3h-1zM211 65h1v3h-1zM221 63h1v5h-1zM232 65h1v3h-1zM242 65h1v3h-1zM253 65h1v3h-1zM263 65h1v3h-1zM274 63h1v5h-1zM284 65h1v3h-1zM294 65h1v3h-1zM305 65h1v3h-1zM315 65h1v3h-1zM326 63h1v5h-1zM336 65h1v3h-1zM346 65h1v3h-1zM357 65h1v3h-1zM367 65h1v3h-1zM378 63h1v5h-1zM388 65h1v3h-1zM399 65h1v3h-1zM409 65h1v3h-1zM419 65h1v3h-1zM430 63h1v5h-1zM440 65h1v3h-1zM451 65h1v3h-1zM461 65h1v3h-1zM472 65h1v3h-1zM482 63h1v5h-1zM492 65h1v3h-1zM503 65h1v3h-1zM513 65h1v3h-1zM524 65h1v3h-1zM534 63h1v5h-1zM545 65h1v3h-1zM555 65h1v3h-1zM565 65h1v3h-1zM576 65h1v3h-1zM586 63h1v5h-1zM597 65h1v3h-1zM607 65h1v3h-1zM618 65h1v3h-1zM628 65h1v3h-1zM638 63h1v5h-1zM649 65h1v3h-1zM659 65h1v3h-1zM670 65h1v3h-1zM680 65h1v3h-1zM690 63h1v5h-1zM701 65h1v3h-1zM711 65h1v3h-1zM722 65h1v3h-1zM732 65h1v3h-1zM743 63h1v5h-1zM753 65h1v3h-1zM763 65h1v3h-1zM774 65h1v3h-1zM784 65h1v3h-1zM795 63h1v5h-1zM805 65h1v3h-1zM816 65h1v3h-1zM826 65h1v3h-1zM836 65h1v3h-1zM847 63h1v5h-1zM857 65h1v3h-1zM868 65h1v3h-1zM878 65h1v3h-1zM889 65h1v3h-1zM899 63h1v5h-1zM909 65h1v3h-1zM920 65h1v3h-1zM930 65h1v3h-1zM941 65h1v3h-1zM951 63h1v5h-1zM961 65h1v3h-1zM972 65h1v3h-1zM982 65h1v3h-1zM993 65h1v3h-1zM1003 63h1v5h-1zM1014 65h1v3h-1zM1024 65h1v3h-1zM1034 65h1v3h-1zM1045 65h1v3h-1zM1055 63h1v5h-1zM1066 65h1v3h-1zM1076 65h1v3h-1zM1087 65h1v3h-1zM1097 65h1v3h-1zM1107 63h1v5h-1zM1118 65h1v3h-1zM1128 65h1v3h-1zM1139 65h1v3h-1zM1149 65h1v3h-1zM1160 63h1v5h-1zM1170 65h1v3h-1zM1180 65h1v3h-1zM1191 65h1v3h-1zM1201 65h1v3h-1zM1212 63h1v5h-1zM1222 65h1v3h-1zM1233 65h1v3h-1zM1243 65h1v3h-1zM1253 65h1v3h-1zM1264 63h1v5h-1zM1274 65h1v3h-1zM1285 65h1v3h-1zM1295 65h1v3h-1zM1305 65h1v3h-1zM1316 63h1v5h-1zM1326 65h1v3h-1zM1337 65h1v3h-1zM1347 65h1v3h-1zM1358 65h1v3h-1zM1368 63h1v5h-1zM1378 65h1v3h-1zM1389 65h1v3h-1zM1399 65h1v3h-1zM1410 65h1v3h-1zM1420 63h1v5h-1zM1431 65h1v3h-1zM1441 65h1v3h-1zM1451 65h1v3h-1zM1462 65h1v3h-1zM1472 63h1v5h-1zM1483 65h1v3h-1zM1493 65h1v3h-1zM1504 65h1v3h-1zM1514 65h1v3h-1zM1524 63h1v5h-1zM1535 65h1v3h-1zM1545 65h1v3h-1zM1556 65h1v3h-1zM1566 65h1v3h-1zM1577 63h1v5h-1zM1587 65h1v3h-1zM1597 65h1v3h-1zM1608 65h1v3h-1zM1618 65h1v3h-1zM1629 63h1v5h-1zM1639 65h1v3h-1zM1649 65h1v3h-1zM1660 65h1v3h-1zM1670 65h1v3h-1zM1681 63h1v5h-1zM1691 65h1v3h-1zM1702 65h1v3h-1zM1712 65h1v3h-1zM1722 65h1v3h-1zM1733 63h1v5h-1zM1743 65h1v3h-1zM1754 65h1v3h-1zM1764 65h1v3h-1zM1775 65h1v3h-1zM1785 63h1v5h-1zM1795 65h1v3h-1zM52 63h1v5h-1zM1803 63h1v5h-1z"/>
<text x="52.5" y="61" text-anchor="middle">6487</text>
<text x="118.2" y="61" text-anchor="middle">6550</text>
<text x="170.3" y="61" text-anchor="middle">6600</text>
<text x="222.4" y="61" text-anchor="middle">6650</text>
<text x="274.5" y="61" text-anchor="middle">6700</text>
<text x="326.6" y="61" text-anchor="middle">6750</text>
<text x="378.8" y="61" text-anchor="middle">6800</text>
<text x="430.9" y="61" text-anchor="middle">6850</text>
<text x="483.0" y="61" text-anchor="middle">6900</text>
<text x="535.1" y="61" text-anchor="middle">6950</text>
<text x="587.2" y="61" text-anchor="middle">7000</text>
<text x="639.4" y="61" text-anchor="middle">7050</text>
<text x="691.5" y="61" text-anchor="middle">7100</text>
<text x="743.6" y="61" text-anchor="middle">7150</text>
<text x="795.7" y="61" text-anchor="middle">7200</text>
<text x="847.8" y="61" text-anchor="middle">7250</text>
<text x="900.0" y="61" text-anchor="middle">7300</text>
<text x="952.1" y="61" text-anchor="middle">7350</text>
<text x="1004.2" y="61" text-anchor="middle">7400</text>
<text x="1056.3" y="61" text-anchor="middle">7450</text>
<text x="1108.4" y="61" text-anchor="middle">7500</text>
<text x="1160.6" y="61" text-anchor="middle">7550</text>
<text x="1212.7" y="61" text-anchor="middle">7600</text>
<text x="1264.8" y="61" text-anchor="middle">7650</text>
<text x="1316.9" y="61" text-anchor="middle">7700</text>
<text x="1369.0" y="61" text-anchor="middle">7750</text>
<text x="1421.1" y="61" text-anchor="middle">7800</text>
<text x="1473.3" y="61" text-anchor="middle">7850</text>
<text x="1525.4" y="61" text-anchor="middle">7900</text>
<text x="1577.5" y="61" text-anchor="middle">7950</text>
<text x="1629.6" y="61" text-anchor="middle">8000</text>
<text x="1681.7" y="61" text-anchor="middle">8050</text>
<text x="1733.9" y="61" text-anchor="middle">8100</text>
<text x="1803.7" y="61" text-anchor="middle">8167</text>
<path d="M46 930h4v1h-4zM1806 930h5v1h-5zM48 919h2v1h-2zM1806 919h3v1h-3zM46 909h4v1h-4zM1806 909h5v1h-5zM48 898h2v1h-2zM1806 898h3v1h-3zM46 887h4v1h-4zM1806 887h5v1h-5zM48 876h2v1h-2zM1806 876h3v1h-3zM46 866h4v1h-4zM1806 866h5v1h-5zM48 855h2v1h-2zM1806 855h3v1h-3zM46 844h4v1h-4zM1806 844h5v1h-5zM48 833h2v1h-2zM1806 833h3v1h-3zM46 823h4v1h-4zM1806 823h5v1h-5zM48 812h2v1h-2zM1806 812h3v1h-3zM46 801h4v1h-4zM1806 801h5v1h-5zM48 790h2v1h-2zM1806 790h3v1h-3zM46 780h4v1h-4zM1806 780h5v1h-5zM48 769h2v1h-2zM1806 769h3v1h-3zM46 758h4v1h-4zM1806 758h5v1h-5zM48 747h2v1h-2zM1806 747h3v1h-3zM46 737h4v1h-4zM1806 737h5v1h-5zM48 726h2v1h-2zM1806 726h3v1h-3zM46 715h4v1h-4zM1806 715h5v1h-5zM48 704h2v1h-2zM1806 704h3v1h-3zM46 694h4v1h-4zM1806 694h5v1h-5zM48 683h2v1h-2zM1806 683h3v1h-3zM46 672h4v1h-4zM1806 672h5v1h-5zM48 661h2v1h-2zM1806 661h3v1h-3zM46 651h4v1h-4zM1806 651h5v1h-5zM48 640h2v1h-2zM1806 640h3v1h-3zM46 629h4v1h-4zM1806 629h5v1h-5zM48 618h2v1h-2zM1806 618h3v1h-3zM46 608h4v1h-4zM1806 608h5v1h-5zM48 597h2v1h-2zM1806 597h3v1h-3zM46 586h4v1h-4zM1806 586h5v1h-5zM48 575h2v1h-2zM1806 575h3v1h-3zM46 565h4v1h-4zM1806 565h5v1h-5zM48 554h2v1h-2zM1806 554h3v1h-3zM46 543h4v1h-4zM1806 543h5v1h-5zM48 532h2v1h-2zM1806 532h3v1h-3zM46 522h4v1h-4zM1806 522h5v1h-5zM48 511h2v1h-2zM1806 511h3v1h-3zM46 500h4v1h-4zM1806 500h5v1h-5zM48 489h2v1h-2zM1806 489h3v1h-3zM46 479h4v1h-4zM1806 479h5v1h-5zM48 468h2v1h-2zM1806 468h3v1h-3zM46 457h4v1h-4zM1806 457h5v1h-5zM48 446h2v1h-2zM1806 446h3v1h-3zM46 436h4v1h-4zM1806 436h5v1h-5zM48 425h2v1h-2zM1806 425h3v1h-3zM46 414h4v1h-4zM1806 414h5v1h-5zM48 403h2v1h-2zM1806 403h3v1h-3zM46 393h4v1h-4zM1806 393h5v1h-5zM48 382h2v1h-2zM1806 382h3v1h-3zM46 371h4v1h-4zM1806 371h5v1h-5zM48 360h2v1h-2zM1806 360h3v1h-3zM46 350h4v1h-4zM1806 350h5v1h-5zM48 339h2v1h-2zM1806 339h3v1h-3zM46 328h4v1h-4zM1806 328h5v1h-5zM48 317h2v1h-2zM1806 317h3v1h-3zM46 307h4v1h-4zM1806 307h5v1h-5zM48 296h2v1h-2zM1806 296h3v1h-3zM46 285h4v1h-4zM1806 285h5v1h-5zM48 274h2v1h-2zM1806 274h3v1h-3zM46 264h4v1h-4zM1806 264h5v1h-5zM48 253h2v1h-2zM1806 253h3v1h-3zM46 242h4v1h-4zM1806 242h5v1h-5zM48 231h2v1h-2zM1806 231h3v1h-3zM46 221h4v1h-4zM1806 221h5v1h-5zM48 210h2v1h-2zM1806 210h3v1h-3zM46 199h4v1h-4zM1806 199h5v1h-5zM48 188h2v1h-2zM1806 188h3v1h-3zM46 178h4v1h-4zM1806 178h5v1h-5zM48 167h2v1h-2zM1806 167h3v1h-3zM46 156h4v1h-4zM1806 156h5v1h-5zM48 145h2v1h-2zM1806 145h3v1h-3zM46 135h4v1h-4zM1806 135h5v1h-5zM48 124h2v1h-2zM1806 124h3v1h-3zM46 113h4v1h-4zM1806 113h5v1h-5zM48 102h2v1h-2zM1806 102h3v1h-3zM46 92h4v1h-4zM1806 92h5v1h-5zM48 81h2v1h-2zM1806 81h3v1h-3zM46 70h4v1h-4zM1806 70h5v1h-5z"/>
<text x="44" y="934.1" text-anchor="end">0</text>
<text x="44" y="912.6" text-anchor="end">5</text>
<text x="44" y="891.1" text-anchor="end">10</text>
<text x="44" y="869.6" text-anchor="end">15</text>
<text x="44" y="848.1" text-anchor="end">20</text>
<text x="44" y="826.6" text-anchor="end">25</text>
<text x="44" y="805.1" text-anchor="end">30</text>
<text x="44" y="783.6" text-anchor="end">35</text>
<text x="44" y="762.1" text-anchor="end">40</text>
<text x="44" y="740.6" text-anchor="end">45</text>
<text x="44" y="719.1" text-anchor="end">50</text>
<text x="44" y="697.6" text-anchor="end">55</text>
<text x="44" y="676.1" text-anchor="end">60</text>
<text x="44" y="654.6" text-anchor="end">65</text>
<text x="44" y="633.1" text-anchor="end">70</text>
<text x="44" y="611.6" text-anchor="end">75</text>
<text x="44" y="590.1" text-anchor="end">80</text>
<text x="44" y="568.6" text-anchor="end">85</text>
<text x="44" y="547.1" text-anchor="end">90</text>
<text x="44" y="525.6" text-anchor="end">95</text>
<text x="44" y="504.1" text-anchor="end">100</text>
<text x="44" y="482.6" text-anchor="end">105</text>
<text x="44" y="461.1" text-anchor="end">110</text>
<text x="44" y="439.6" text-anchor="end">115</text>
<text x="44" y="418.1" text-anchor="end">120</text>
<text x="44" y="396.6" text-anchor="end">125</text>
<text x="44" y="375.1" text-anchor="end">130</text>
<text x="44" y="353.6" text-anchor="end">135</text>
<text x="44" y="332.1" text-anchor="end">140</text>
<text x="44" y="310.6" text-anchor="end">145</text>
<text x="44" y="289.1" text-anchor="end">150</text>
<text x="44" y="267.6" text-anchor="end">155</text>
<text x="44" y="246.1" text-anchor="end">160</text>
<text x="44" y="224.6" text-anchor="end">165</text>
<text x="44" y="203.1" text-anchor="end">170</text>
<text x="44" y="181.6" text-anchor="end">175</text>
<text x="44" y="160.1" text-anchor="end">180</text>
<text x="44" y="138.6" text-anchor="end">185</text>
<text x="44" y="117.1" text-anchor="end">190</text>
<text x="44" y="95.6" text-anchor="end">195</text>
<text x="44" y="74.1" text-anchor="end">200</text>
<path d="M52 933h1v5h-1zM1803 933h1v5h-1zM53 933h1v3h-1zM60 933h1v3h-1zM66 933h1v3h-1zM72 933h1v3h-1zM79 933h1v3h-1zM85 933h1v3h-1zM91 933h1v3h-1zM98 933h1v3h-1zM104 933h1v3h-1zM111 933h1v5h-1zM117 933h1v3h-1zM123 933h1v3h-1zM130 933h1v3h-1zM136 933h1v3h-1zM142 933h1v3h-1zM149 933h1v3h-1zM155 933h1v3h-1zM161 933h1v3h-1zM168 933h1v3h-1zM174 933h1v3h-1zM181 933h1v3h-1zM187 933h1v5h-1zM193 933h1v3h-1zM200 933h1v3h-1zM206 933h1v3h-1zM212 933h1v3h-1zM219 933h1v3h-1zM225 933h1v3h-1zM231 933h1v3h-1zM238 933h1v3h-1zM244 933h1v3h-1zM251 933h1v3h-1zM257 933h1v3h-1zM263 933h1v5h-1zM270 933h1v3h-1zM276 933h1v3h-1zM282 933h1v3h-1zM289 933h1v3h-1zM295 933h1v3h-1zM301 933h1v3h-1zM308 933h1v3h-1zM314 933h1v3h-1zM321 933h1v3h-1zM327 933h1v3h-1zM333 933h1v3h-1zM340 933h1v5h-1zM346 933h1v3h-1zM352 933h1v3h-1zM359 933h1v3h-1zM365 933h1v3h-1zM371 933h1v3h-1zM378 933h1v3h-1zM384 933h1v3h-1zM391 933h1v3h-1zM397 933h1v3h-1zM403 933h1v3h-1zM410 933h1v3h-1zM416 933h1v5h-1zM422 933h1v3h-1zM429 933h1v3h-1zM435 933h1v3h-1zM441 933h1v3h-1zM448 933h1v3h-1zM454 933h1v3h-1zM460 933h1v3h-1zM467 933h1v3h-1zM473 933h1v3h-1zM480 933h1v3h-1zM486 933h1v3h-1zM492 933h1v5h-1zM499 933h1v3h-1zM505 933h1v3h-1zM511 933h1v3h-1zM518 933h1v3h-1zM524 933h1v3h-1zM530 933h1v3h-1zM537 933h1v3h-1zM543 933h1v3h-1zM550 933h1v3h-1zM556 933h1v3h-1zM562 933h1v3h-1zM569 933h1v5h-1zM575 933h1v3h-1zM581 933h1v3h-1zM588 933h1v3h-1zM594 933h1v3h-1zM600 933h1v3h-1zM607 933h1v3h-1zM613 933h1v3h-1zM620 933h1v3h-1zM626 933h1v3h-1zM632 933h1v3h-1zM639 933h1v3h-1zM645 933h1v5h-1zM651 933h1v3h-1zM658 933h1v3h-1zM664 933h1v3h-1zM670 933h1v3h-1zM677 933h1v3h-1zM683 933h1v3h-1zM690 933h1v3h-1zM696 933h1v3h-1zM702 933h1v3h-1zM709 933h1v3h-1zM715 933h1v3h-1zM721 933h1v5h-1zM728 933h1v3h-1zM734 933h1v3h-1zM740 933h1v3h-1zM747 933h1v3h-1zM753 933h1v3h-1zM760 933h1v3h-1zM766 933h1v3h-1zM772 933h1v3h-1zM779 933h1v3h-1zM785 933h1v3h-1zM791 933h1v3h-1zM798 933h1v5h-1zM804 933h1v3h-1zM810 933h1v3h-1zM817 933h1v3h-1zM823 933h1v3h-1zM830 933h1v3h-1zM836 933h1v3h-1zM842 933h1v3h-1zM849 933h1v3h-1zM855 933h1v3h-1zM861 933h1v3h-1zM868 933h1v3h-1zM874 933h1v5h-1zM880 933h1v3h-1zM887 933h1v3h-1zM893 933h1v3h-1zM899 933h1v3h-1zM906 933h1v3h-1zM912 933h1v3h-1zM919 933h1v3h-1zM925 933h1v3h-1zM931 933h1v3h-1zM938 933h1v3h-1zM944 933h1v3h-1zM950 933h1v5h-1zM957 933h1v3h-1zM963 933h1v3h-1zM969 933h1v3h-1zM976 933h1v3h-1zM982 933h1v3h-1zM989 933h1v3h-1zM995 933h1v3h-1zM1001 933h1v3h-1zM1008 933h1v3h-1zM1014 933h1v3h-1zM1020 933h1v3h-1zM1027 933h1v5h-1zM1033 933h1v3h-1zM1039 933h1v3h-1zM1046 933h1v3h-1zM1052 933h1v3h-1zM1059 933h1v3h-1zM1065 933h1v3h-1zM1071 933h1v3h-1zM1078 933h1v3h-1zM1084 933h1v3h-1zM1090 933h1v3h-1zM1097 933h1v3h-1zM1103 933h1v5h-1zM1109 933h1v3h-1zM1116 933h1v3h-1zM1122 933h1v3h-1zM1129 933h1v3h-1zM1135 933h1v3h-1zM1141 933h1v3h-1zM1148 933h1v3h-1zM1154 933h1v3h-1zM1160 933h1v3h-1zM1167 933h1v3h-1zM1173 933h1v3h-1zM1179 933h1v5h-1zM1186 933h1v3h-1zM1192 933h1v3h-1zM1199 933h1v3h-1zM1205 933h1v3h-1zM1211 933h1v3h-1zM1218 933h1v3h-1zM1224 933h1v3h-1zM1230 933h1v3h-1zM1237 933h1v3h-1zM1243 933h1v3h-1zM1249 933h1v3h-1zM1256 933h1v5h-1zM1262 933h1v3h-1zM1268 933h1v3h-1zM1275 933h1v3h-1zM1281 933h1v3h-1zM1288 933h1v3h-1zM1294 933h1v3h-1zM1300 933h1v3h-1zM1307 933h1v3h-1zM1313 933h1v3h-1zM1319 933h1v3h-1zM1326 933h1v3h-1zM1332 933h1v5h-1zM1338 933h1v3h-1zM1345 933h1v3h-1zM1351 933h1v3h-1zM1358 933h1v3h-1zM1364 933h1v3h-1zM1370 933h1v3h-1zM1377 933h1v3h-1zM1383 933h1v3h-1zM1389 933h1v3h-1zM1396 933h1v3h-1zM1402 933h1v3h-1zM1408 933h1v5h-1zM1415 933h1v3h-1zM1421 933h1v3h-1zM1428 933h1v3h-1zM1434 933h1v3h-1zM1440 933h1v3h-1zM1447 933h1v3h-1zM1453 933h1v3h-1zM1459 933h1v3h-1zM1466 933h1v3h-1zM1472 933h1v3h-1zM1478 933h1v3h-1zM1485 933h1v5h-1zM1491 933h1v3h-1zM1498 933h1v3h-1zM1504 933h1v3h-1zM1510 933h1v3h-1zM1517 933h1v3h-1zM1523 933h1v3h-1zM1529 933h1v3h-1zM1536 933h1v3h-1zM1542 933h1v3h-1zM1548 933h1v3h-1zM1555 933h1v3h-1zM1561 933h1v5h-1zM1568 933h1v3h-1zM1574 933h1v3h-1zM1580 933h1v3h-1zM1587 933h1v3h-1zM1593 933h1v3h-1zM1599 933h1v3h-1zM1606 933h1v3h-1zM1612 933h1v3h-1zM1618 933h1v3h-1zM1625 933h1v3h-1zM1631 933h1v3h-1zM1638 933h1v5h-1zM1644 933h1v3h-1zM1650 933h1v3h-1zM1657 933h1v3h-1zM1663 933h1v3h-1zM1669 933h1v3h-1zM1676 933h1v3h-1zM1682 933h1v3h-1zM1688 933h1v3h-1zM1695 933h1v3h-1zM1701 933h1v3h-1zM1707 933h1v3h-1zM1714 933h1v5h-1zM1720 933h1v3h-1zM1727 933h1v3h-1zM1733 933h1v3h-1zM1739 933h1v3h-1zM1746 933h1v3h-1zM1752 933h1v3h-1zM1758 933h1v3h-1zM1765 933h1v3h-1zM1771 933h1v3h-1zM1777 933h1v3h-1zM1784 933h1v3h-1zM1790 933h1v5h-1zM1797 933h1v3h-1z"/>
<text x="52.0" y="948" text-anchor="middle">23:36:07.850</text>
<text x="52.0" y="960" text-anchor="middle">04/16/2026</text>
<text x="187.4" y="948" text-anchor="middle">23:45:00.000</text>
<text x="187.4" y="960" text-anchor="middle">04/16/2026</text>
<text x="263.8" y="948" text-anchor="middle">23:50:00.000</text>
<text x="263.8" y="960" text-anchor="middle">04/16/2026</text>
<text x="340.1" y="948" text-anchor="middle">23:55:00.000</text>
<text x="340.1" y="960" text-anchor="middle">04/16/2026</text>
<text x="416.5" y="948" text-anchor="middle">00:00:00.000</text>
<text x="416.5" y="960" text-anchor="middle">04/17/2026</text>
<text x="492.8" y="948" text-anchor="middle">00:05:00.000</text>
<text x="492.8" y="960" text-anchor="middle">04/17/2026</text>
<text x="569.2" y="948" text-anchor="middle">00:10:00.000</text>
<text x="569.2" y="960" text-anchor="middle">04/17/2026</text>
<text x="645.5" y="948" text-anchor="middle">00:15:00.000</text>
<text x="645.5" y="960" text-anchor="middle">04/17/2026</text>
<text x="721.8" y="948" text-anchor="middle">00:20:00.000</text>
<text x="721.8" y="960" text-anchor="middle">04/17/2026</text>
<text x="798.2" y="948" text-anchor="middle">00:25:00.000</text>
<text x="798.2" y="960" text-anchor="middle">04/17/2026</text>
<text x="874.5" y="948" text-anchor="middle">00:30:00.000</text>
<text x="874.5" y="960" text-anchor="middle">04/17/2026</text>
<text x="950.9" y="948" text-anchor="middle">00:35:00.000</text>
<text x="950.9" y="960" text-anchor="middle">04/17/2026</text>
<text x="1027.2" y="948" text-anchor="middle">00:40:00.000</text>
<text x="1027.2" y="960" text-anchor="middle">04/17/2026</text>
<text x="1103.6" y="948" text-anchor="middle">00:45:00.000</text>
<text x="1103.6" y="960" text-anchor="middle">04/17/2026</text>
<text x="1179.9" y="948" text-anchor="middle">00:50:00.000</text>
<text x="1179.9" y="960" text-anchor="middle">04/17/2026</text>
<text x="1256.3" y="948" text-anchor="middle">00:55:00.000</text>
<text x="1256.3" y="960" text-anchor="middle">04/17/2026</text>
<text x="1332.6" y="948" text-anchor="middle">01:00:00.000</text>
<text x="1332.6" y="960" text-anchor="middle">04/17/2026</text>
<text x="1409.0" y="948" text-anchor="middle">01:05:00.000</text>
<text x="1409.0" y="960" text-anchor="middle">04/17/2026</text>
<text x="1485.3" y="948" text-anchor="middle">01:10:00.000</text>
<text x="1485.3" y="960" text-anchor="middle">04/17/2026</text>
<text x="1561.7" y="948" text-anchor="middle">01:15:00.000</text>
<text x="1561.7" y="960" text-anchor="middle">04/17/2026</text>
<text x="1638.0" y="948" text-anchor="middle">01:20:00.000</text>
<text x="1638.0" y="960" text-anchor="middle">04/17/2026</text>
<text x="1714.4" y="948" text-anchor="middle">01:25:00.000</text>
<text x="1714.4" y="960" text-anchor="middle">04/17/2026</text>
<text x="1803.2" y="948" text-anchor="middle">01:30:49.130</text>
<text x="1803.2" y="960" text-anchor="middle">04/17/2026</text>
<text x="925" y="974" text-anchor="middle">Time</text>
<text x="1869" y="83">-5.00</text>
<text x="1869" y="511">-9.00</text>
<text x="1869" y="939">-13.00</text>
<text transform="translate(1909.5 444.5) rotate(90)">Amplitude(Log10(g^2/Hz))</text>
</svg>
</body></html>
